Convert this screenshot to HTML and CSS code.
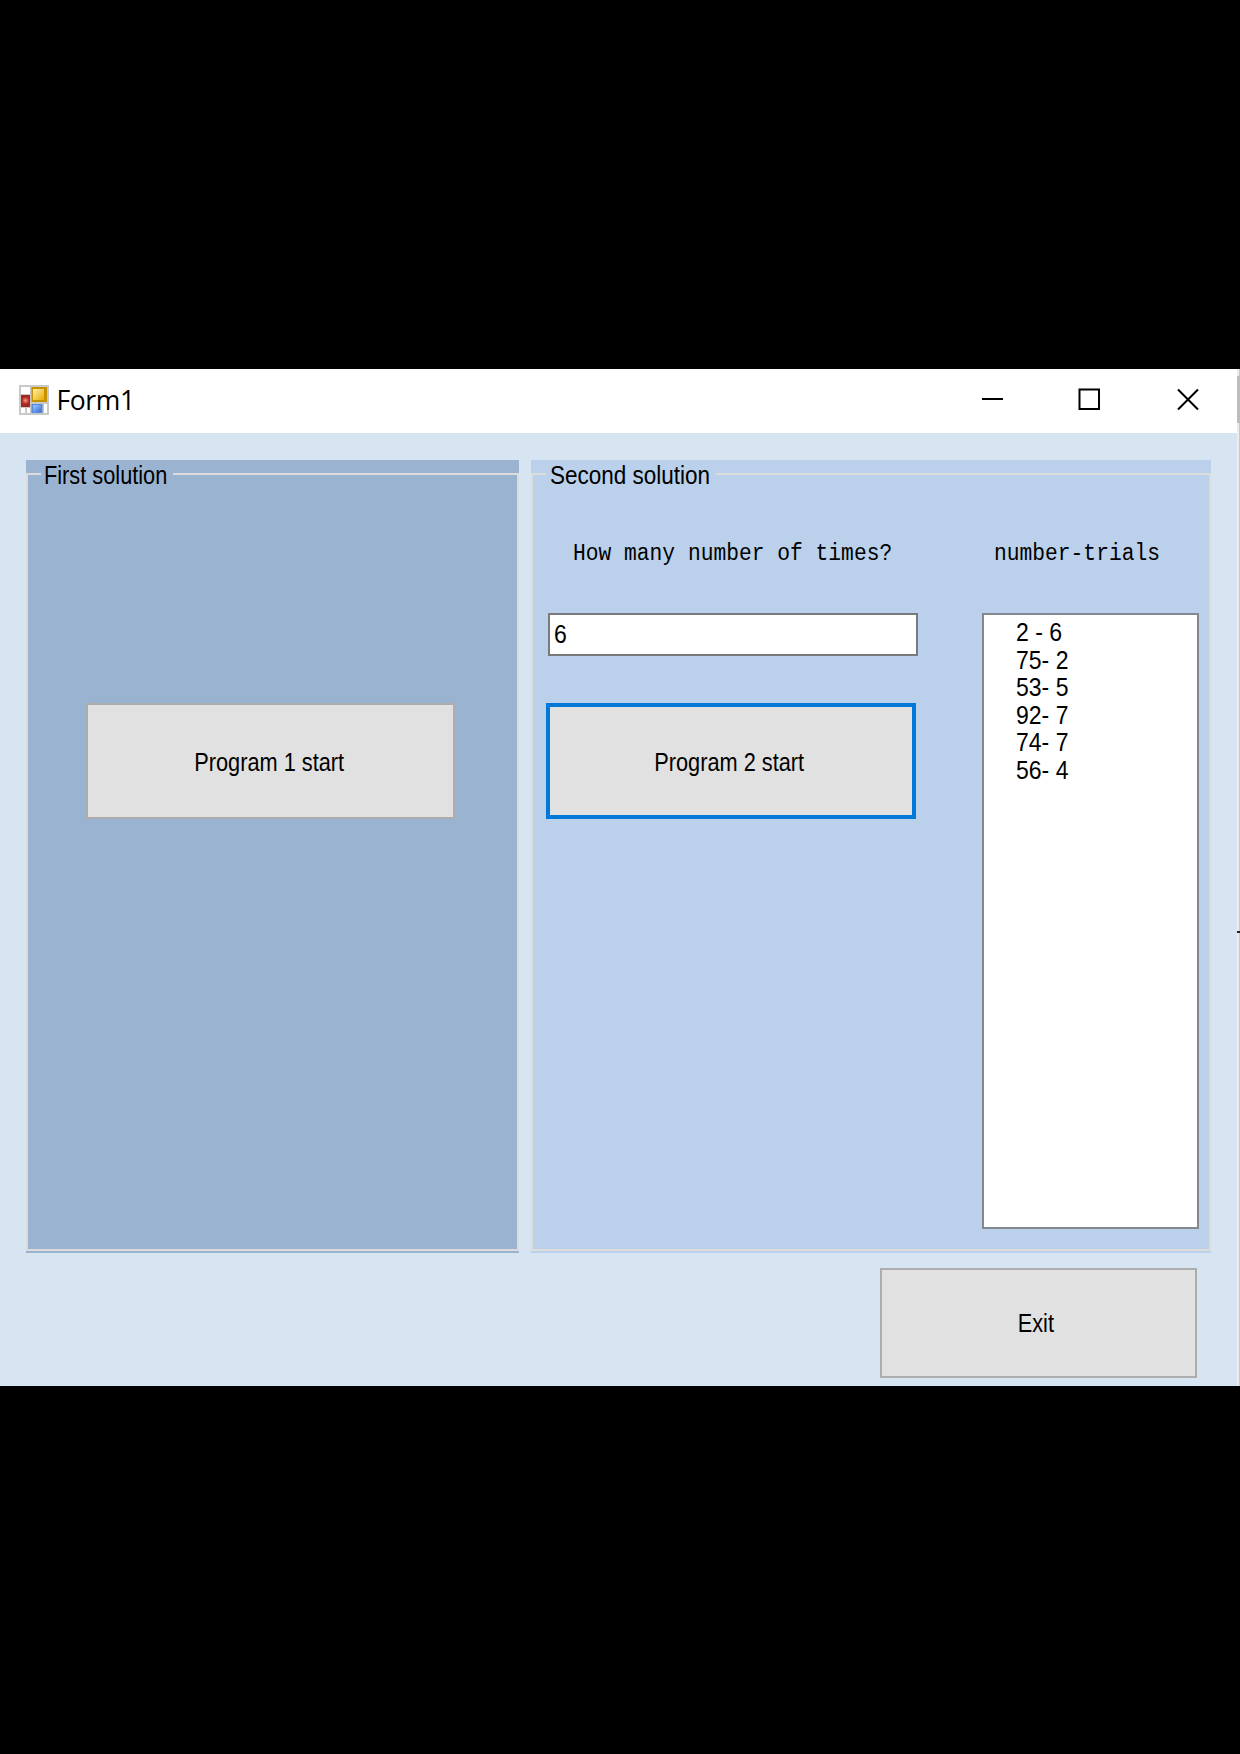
FILE: index.html
```html
<!DOCTYPE html>
<html lang="en">
<head>
<meta charset="utf-8">
<title>Form1</title>
<link rel="stylesheet" href="styles.css">
</head>
<body>
<div class="screen">
  <main class="window">
    <header class="titlebar">
      <svg class="app-icon" width="30" height="30" viewBox="0 0 30 30">
        <defs>
          <linearGradient id="gold" x1="0" y1="0" x2="1" y2="1"><stop offset="0" stop-color="#fff0a8"/><stop offset="1" stop-color="#e8ac00"/></linearGradient>
          <radialGradient id="red"><stop offset="0" stop-color="#f09a8c"/><stop offset="1" stop-color="#b62a20"/></radialGradient>
          <linearGradient id="blue" x1="0" y1="0" x2="1" y2="1"><stop offset="0" stop-color="#a4c6fa"/><stop offset="1" stop-color="#376fd4"/></linearGradient>
        </defs>
        <rect width="30" height="30" fill="#c9c9c9"/>
        <path fill="#fff" d="M2 2h9v7H2zM2 23h4v5H2zM8 23h3v5H8zM25 19h3v9h-3z"/>
        <rect x="2" y="10" width="9" height="12" fill="#9f2820"/><rect x="3" y="12" width="7" height="7" fill="url(#red)"/>
        <rect x="12.500" y="2" width="15.500" height="15" fill="#c59200"/><rect x="14" y="4" width="11" height="11" fill="url(#gold)"/>
        <rect x="12.500" y="19" width="11" height="9" fill="#5588df"/><rect x="14" y="20" width="8" height="7" fill="url(#blue)"/>
      </svg>
      <h1 class="title">Form1</h1>
      <svg class="controls" width="220" height="24" viewBox="0 0 220 24" fill="none" stroke="#000" stroke-width="2">
        <path d="M1 12h21"/><rect x="98.500" y="2.500" width="19.500" height="19.500"/><path d="M197 2.500l20 20M217 2.500l-20 20"/>
      </svg>
    </header>
    <div class="form">
      <div class="groups">
        <section class="group first">
          <div class="frame">
            <h2 class="legend"><span class="ui">First solution</span></h2>
            <button class="button"><span class="ui">Program 1 start</span></button>
          </div>
        </section>
        <section class="group second">
          <div class="frame">
            <h2 class="legend"><span class="ui">Second solution</span></h2>
            <div class="columns">
              <div class="entry">
                <label class="label" for="times"><span class="mono">How many number of times?</span></label>
                <div class="textbox" id="times"><span class="ui digits">6</span></div>
                <button class="button focused"><span class="ui">Program 2 start</span></button>
              </div>
              <div class="results">
                <div class="label"><span class="mono">number-trials</span></div>
                <ul class="listbox">
                  <li><span class="ui digits">2 - 6</span></li>
                  <li><span class="ui digits">75- 2</span></li>
                  <li><span class="ui digits">53- 5</span></li>
                  <li><span class="ui digits">92- 7</span></li>
                  <li><span class="ui digits">74- 7</span></li>
                  <li><span class="ui digits">56- 4</span></li>
                </ul>
              </div>
            </div>
          </div>
        </section>
      </div>
      <button class="button exit"><span class="ui">Exit</span></button>
    </div>
  </main>
  <aside class="edge"><div class="thumb"></div><div class="tick"></div></aside>
</div>
</body>
</html>
```
FILE: styles.css
```css
* { box-sizing: border-box; margin: 0; padding: 0; }
body { background: #000; height: 1754px; padding-top: 369px; overflow: hidden; color: #000; }
.screen { display: flex; width: 1240px; height: 1017px; background: #fff; }
.window { width: 1237px; display: flex; flex-direction: column; }
.titlebar { height: 64px; display: flex; align-items: center; padding: 0 36px 0 19px; }
.app-icon { margin-bottom: 2px; }
.title { font: 400 26.5px/36px "Open Sans", sans-serif; margin: 0 0 3px 7.500px; letter-spacing: -.4px; }
.controls { margin: 0 0 4px auto; }

.form { flex: 1; background: #d7e4f2; padding: 27px 26px 0; display: flex; flex-direction: column; }
.groups { display: flex; gap: 12.500px; }
.group { flex: none; height: 792.500px; padding: 13px 0 1.500px; }
.first { width: 492.500px; background: #99b3d1; }
.second { width: 680px; background: #bad0eb; }
.frame { height: 100%; border: 2px solid #dcdcdc; }
.first .frame { padding-left: 58px; }
.second .frame { padding-left: 13px; }
.legend { display: block; width: 132px; height: 24px; margin: -14px 0 1px -45.500px; padding-left: 3px; background: #99b3d1; font-weight: 400; }
.second .legend { width: 170px; margin-left: 0; padding-left: 4px; background: #bad0eb; }
.ui { display: inline-block; font: 400 25px/28px "Liberation Sans", Arial, sans-serif; transform: scaleX(.87); transform-origin: 0 50%; white-space: pre; }
.second .legend .ui { transform: scaleX(.9); }
.digits { transform: scaleX(.92); }
.mono { display: inline-block; font: 400 23px/28px "Liberation Mono", monospace; transform: scaleX(.925); transform-origin: 0 50%; white-space: pre; }

.button { display: flex; align-items: center; justify-content: center; width: 369px; height: 116px; background: #e1e1e1; border: 2px solid #adadad; color: #000; padding: 1px 3px 0 0; }
.button .ui { transform-origin: 50% 50%; }
.first .button { margin-top: 218px; }
.focused { width: 370px; border: 4px solid #0078d7; margin: 46px 0 0 0; }
.exit { width: 317px; height: 110.500px; margin: 15px 14px 0 auto; padding: 0 5px 0 0; }

.columns { display: flex; gap: 64px; }
.entry { width: 372px; }
.label { display: block; height: 127px; padding: 54px 0 0 27px; }
.results .label { padding-left: 12px; }
.textbox { width: 370px; height: 43px; margin: 0 0 1px 2px; border: 2px solid #7a7a7a; background: #fff; padding: 5px 4px; }
.entry .focused { margin-top: 47px; }
.results { width: 217px; }
.listbox { width: 217px; height: 616px; border: 2px solid #828790; background: #fff; list-style: none; padding: 3px 0 0 31.500px; }
.listbox li { height: 27.500px; line-height: 27.500px; }

.edge { width: 3px; background: #ececec; border-right: 1px solid #c8c8c8; padding-top: 7px; }
.thumb { height: 47px; width: 3px; background: #bdbdbd; }
.tick { height: 2px; width: 3px; margin-top: 508px; background: #222; }
```
